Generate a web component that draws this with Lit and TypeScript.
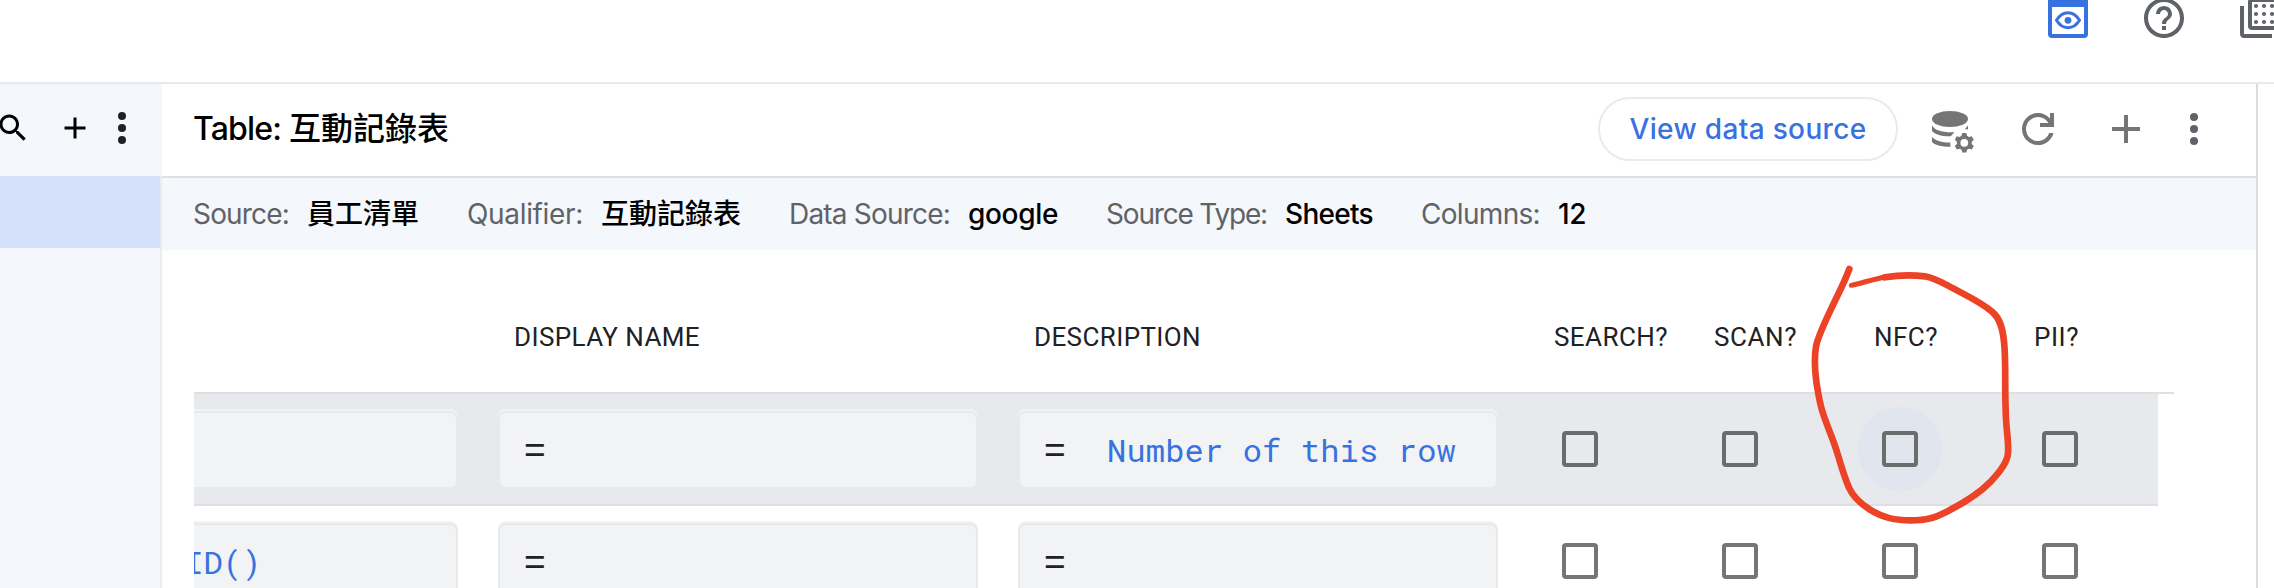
import { LitElement, html, css, svg, nothing } from "lit";
import { customElement, property, query } from "lit/decorators.js";

/** One line of text whose tracking is set so that it fills a given width. */
@customElement("fit-text")
class FitText extends LitElement {
  @property() text = "";
  @property({ type: Number }) width = 0;
  @query("span") span!: HTMLSpanElement;

  static styles = css`
    :host { display: inline-block; white-space: pre; }
    span { display: inline-block; }
  `;

  firstUpdated() {
    const natural = this.span.getBoundingClientRect().width;
    const spacing = (this.width - natural) / this.text.length;
    this.span.style.letterSpacing = `${spacing.toFixed(3)}px`;
  }

  render() {
    return html`<span>${this.text}</span>`;
  }
}

const facts = [
  { label: "Source:", labelWidth: 96, value: "員工清單", valueWidth: 112 },
  { label: "Qualifier:", labelWidth: 116, value: "互動記錄表", valueWidth: 140 },
  { label: "Data Source:", labelWidth: 161, value: "google", valueWidth: 90 },
  { label: "Source Type:", labelWidth: 161, value: "Sheets", valueWidth: 88 },
  { label: "Columns:", labelWidth: 119, value: "12", valueWidth: 28 },
];

const headings = [
  { text: "", width: 0 },
  { text: "DISPLAY NAME", width: 186 },
  { text: "DESCRIPTION", width: 167 },
  { text: "SEARCH?", width: 114 },
  { text: "SCAN?", width: 83 },
  { text: "NFC?", width: 64 },
  { text: "PII?", width: 45 },
];

const rows = [
  { active: true, initial: "", description: "Number of this row" },
  { active: false, initial: "ID()", description: "" },
];

const gearTeeth = [0, 60, 120, 180, 240, 300];

@customElement("app-root")
class AppRoot extends LitElement {
  static styles = css`
    :host {
      display: block;
      position: relative;
      width: 2274px;
      height: 588px;
      overflow: hidden;
      background: #fff;
      font-family: "Google Sans", "Inter", "Noto Sans CJK TC", sans-serif;
      color: #000;
    }
    * { box-sizing: border-box; }
    svg { display: block; flex: none; overflow: visible; }
    .topbar {
      display: flex;
      justify-content: flex-end;
      height: 84px;
      gap: 56px;
      border-bottom: 2px solid #e8eaed;
    }
    .body { display: flex; height: 504px; }
    .side { width: 162px; background: #f4f7fc; display: flex; flex-direction: column; }
    .tools { display: flex; height: 92px; align-items: center; padding-bottom: 4px; }
    .search { margin-left: -5px; }
    .add { margin-left: 26px; }
    .dots { margin-left: 11px; }
    .rest { flex: 1; border-right: 2px solid #ececee; }
    .selected { height: 72px; background: #d5e1fa; }
    .main { width: 2096px; border-right: 2px solid #dadce0; display: flex; flex-direction: column; }
    .head {
      display: flex;
      align-items: center;
      height: 94px;
      padding: 0 44px 2px 31px;
      border-bottom: 2px solid #dfe1e1;
    }
    .title { display: flex; gap: 10px; font-size: 32px; line-height: 40px; font-weight: 500; flex: 1; }
    .title fit-text { width: 86px; }
    .view {
      width: 300px;
      height: 64px;
      margin-right: 34px;
      border: 2px solid #e8eaed;
      border-radius: 32px;
      display: flex;
      align-items: center;
      justify-content: center;
      font-size: 28px;
      font-weight: 500;
      color: #3871e0;
    }
    .refresh { margin-left: 40px; }
    .plus { margin-left: 40px; }
    .more { margin-left: 26px; }
    .facts {
      display: flex;
      align-items: center;
      height: 72px;
      padding-left: 31px;
      gap: 48px;
      background: #f4f7fc;
      font-size: 28px;
      line-height: 36px;
    }
    .fact { display: flex; gap: 18px; }
    .label { color: #5f6368; }
    .value { font-weight: 500; }
    .sheet { margin-left: 32px; overflow: hidden; flex: 1; }
    .grid { margin-left: -216px; width: 2196px; }
    .cols {
      display: grid;
      grid-template-columns: 520px 520px 520px 160px 160px 160px 156px;
    }
    .headings {
      height: 144px;
      padding-top: 71px;
      border-bottom: 2px solid #dfe0e1;
      font: 400 26px/32px "Roboto", sans-serif;
      color: #202124;
    }
    .heading { padding-left: 16px; }
    .row { width: 2180px; height: 112px; border-bottom: 2px solid #dfe0e1; align-items: center; }
    .row.active { background: #e8e9ed; }
    .field {
      width: 480px;
      height: 78px;
      margin-top: 2px;
      border: 2px solid #e8e9ed;
      border-radius: 8px;
      background: #f1f3f5;
      box-shadow: 0 -2px 0 #f1f3f5;
      display: flex;
      align-items: center;
      padding-left: 24px;
    }
    .equals { width: 63px; font: 400 37px/40px "Liberation Sans", sans-serif; color: #202124; }
    .formula {
      font: 400 32px/40px "Roboto Mono", "DejaVu Sans Mono", monospace;
      letter-spacing: 0.18px;
      color: #3871e0;
      white-space: pre;
    }
    .initial { padding-left: 180px; }
    .cell { width: 84px; height: 84px; border-radius: 50%; display: grid; place-items: center; }
    .hover { background: #e0e5ee; }
    .box { width: 36px; height: 36px; border: 4px solid #757575; border-radius: 4px; }
    .active .box { border-color: #6b6c6e; }
    .mark { position: absolute; left: 1780px; top: 250px; }
  `;

  private topIcons() {
    return html`
      <svg width="40" height="40" viewBox="2048 0 40 40">
        <rect x="2050" y="0" width="36" height="36" rx="2" fill="none" stroke="#3871e0" stroke-width="4" />
        <path d="M2048 0h40v7h-40z" fill="#3871e0" />
        <path d="M2056.5 20.3Q2061 12.7 2068 12.7T2079.500 20.3Q2075 27.700 2068 27.700T2056.500 20.3Z" fill="none" stroke="#3871e0" stroke-width="3" />
        <circle cx="2068" cy="20.300" r="3.400" fill="#3871e0" />
      </svg>
      <svg width="40" height="40" viewBox="2 3 20 20">
        <path fill="#5f6368" d="M11 18h2v-2h-2v2zm1-16C6.480 2 2 6.480 2 12s4.480 10 10 10 10-4.480 10-10S17.520 2 12 2zm0 18c-4.410 0-8-3.590-8-8s3.590-8 8-8 8 3.590 8 8-3.590 8-8 8zm0-14c-2.210 0-4 1.790-4 4h2c0-1.100.900-2 2-2s2 .900 2 2c0 2-3 1.750-3 5h2c0-2.250 3-2.500 3-5 0-2.210-1.790-4-4-4z" />
      </svg>
      <svg width="34" height="40" viewBox="2240 0 34 40">
        <path d="M2242 6v27.500q0 2.500 2.500 2.500H2272" fill="none" stroke="#5f6368" stroke-width="4" />
        <rect x="2250" y="0" width="36" height="28" rx="2" fill="none" stroke="#5f6368" stroke-width="4" />
        ${[6, 14, 22].map((y) =>
          [2256, 2264, 2272].map((x) => svg`<circle cx=${x} cy=${y} r="2.100" fill="#5f6368" />`),
        )}
      </svg>
    `;
  }

  private dots(name: string, color: string) {
    return html`<svg class=${name} width="36" height="36" viewBox="-18 -18 36 36">
      ${[-12, 0, 12].map((y) => svg`<circle cx="0" cy=${y} r="4" fill=${color} />`)}
    </svg>`;
  }

  private databaseIcon() {
    return html`<svg width="42" height="42" viewBox="0 -3 42 42" fill="#757575">
      <ellipse cx="18" cy="8" rx="18" ry="8" />
      <path d="M0 14.500C3 19.500 10 21.600 22.400 21.200L18.800 25.300C9 25.500 2.500 23.200 0 20Z" />
      <path d="M36 14.500V18.400L33 18Z" />
      <path d="M0 25.800C3 29.800 9 31.500 18.200 31.600L18.600 35.800C9 35.800 2.500 34 0 31Z" />
      <circle cx="32.300" cy="31.800" r="5.700" fill="none" stroke="#757575" stroke-width="3.600" />
      ${gearTeeth.map(
        (a) => svg`<path d="M29.300 25.800L30.300 22H34.300L35.300 25.800Z" transform="rotate(${a} 32.300 31.800)" />`,
      )}
    </svg>`;
  }

  private field(content: unknown) {
    return html`<div class="field"><span class="equals">=</span>${content}</div>`;
  }

  render() {
    return html`
      <div class="topbar">${this.topIcons()}</div>
      <div class="body">
        <div class="side">
          <div class="tools">
            <svg class="search" width="36" height="36" viewBox="0 0 24 24"><path d="M15.500 14h-.790l-.280-.270C15.410 12.590 16 11.110 16 9.500 16 5.910 13.090 3 9.500 3S3 5.910 3 9.500 5.910 16 9.500 16c1.610 0 3.090-.590 4.230-1.570l.270.280v.790l5 4.990L20.490 19l-4.990-5zm-6 0C7.010 14 5 11.990 5 9.500S7.010 5 9.500 5 14 7.010 14 9.500 11.990 14 9.500 14z" /></svg>
            <svg class="add" width="36" height="36" viewBox="0 0 24 24"><path d="M19 13h-6v6h-2v-6H5v-2h6V5h2v6h6z" /></svg>
            ${this.dots("dots", "#202124")}
          </div>
          <div class="rest"><div class="selected"></div></div>
        </div>
        <div class="main">
          <div class="head">
            <div class="title"><fit-text text="Table:" .width=${88}></fit-text><span>互動記錄表</span></div>
            <div class="view"><fit-text text="View data source" .width=${237}></fit-text></div>
            ${this.databaseIcon()}
            <svg class="refresh" width="48" height="48" viewBox="0 -960 960 960" fill="#757575"><path d="M480-160q-134 0-227-93t-93-227q0-134 93-227t227-93q69 0 132 28.500T720-690v-110h80v280H520v-80h168q-32-56-87.500-88T480-720q-100 0-170 70t-70 170q0 100 70 170t170 70q77 0 139-44t87-116h84q-28 106-114 173t-196 67Z" /></svg>
            <svg class="plus" width="48" height="48" viewBox="0 0 24 24" fill="#757575"><path d="M19 13h-6v6h-2v-6H5v-2h6V5h2v6h6z" /></svg>
            ${this.dots("more", "#5f6368")}
          </div>
          <div class="facts">
            ${facts.map(
              (f) => html`<div class="fact">
                <fit-text class="label" text=${f.label} .width=${f.labelWidth}></fit-text>
                <fit-text class="value" text=${f.value} .width=${f.valueWidth}></fit-text>
              </div>`,
            )}
          </div>
          <div class="sheet">
            <div class="grid">
              <div class="cols headings">
                ${headings.map(
                  (h) => html`<div class="heading">
                    ${h.text ? html`<fit-text text=${h.text} .width=${h.width}></fit-text>` : nothing}
                  </div>`,
                )}
              </div>
              ${rows.map(
                (r) => html`<div class="cols row ${r.active ? "active" : ""}">
                  <div class="field"><span class="formula initial">${r.initial}</span></div>
                  ${this.field(nothing)}
                  ${this.field(html`<span class="formula">${r.description}</span>`)}
                  ${[0, 1, 2, 3].map(
                    (i) => html`<div class="cell ${r.active && i === 2 ? "hover" : ""}"><div class="box"></div></div>`,
                  )}
                </div>`,
              )}
            </div>
          </div>
        </div>
      </div>
      <svg class="mark" width="494" height="338" viewBox="0 0 1482 1014" fill="none" stroke="#ec4226" stroke-linecap="round" stroke-linejoin="round">
        <path stroke-width="20" d="M208 57C190 105 175 130 158 167C135 215 113 262 108 290C103 320 105 365 109 395C115 435 120 465 129 490C142 530 157 562 169 600C182 640 191 678 208 715C222 745 245 763 270 779C310 804 345 811 393 811C440 811 460 805 500 785C550 760 600 728 632 695C655 671 682 640 684 610C687 575 678 540 677 480C674 400 678 330 672 275C668 235 660 205 636 185C605 158 560 137 525 118C490 100 465 84 435 79C395 74 350 76 315 82" />
        <path stroke-width="15" d="M320 80C280 87 250 98 214 106" />
      </svg>
    `;
  }
}
